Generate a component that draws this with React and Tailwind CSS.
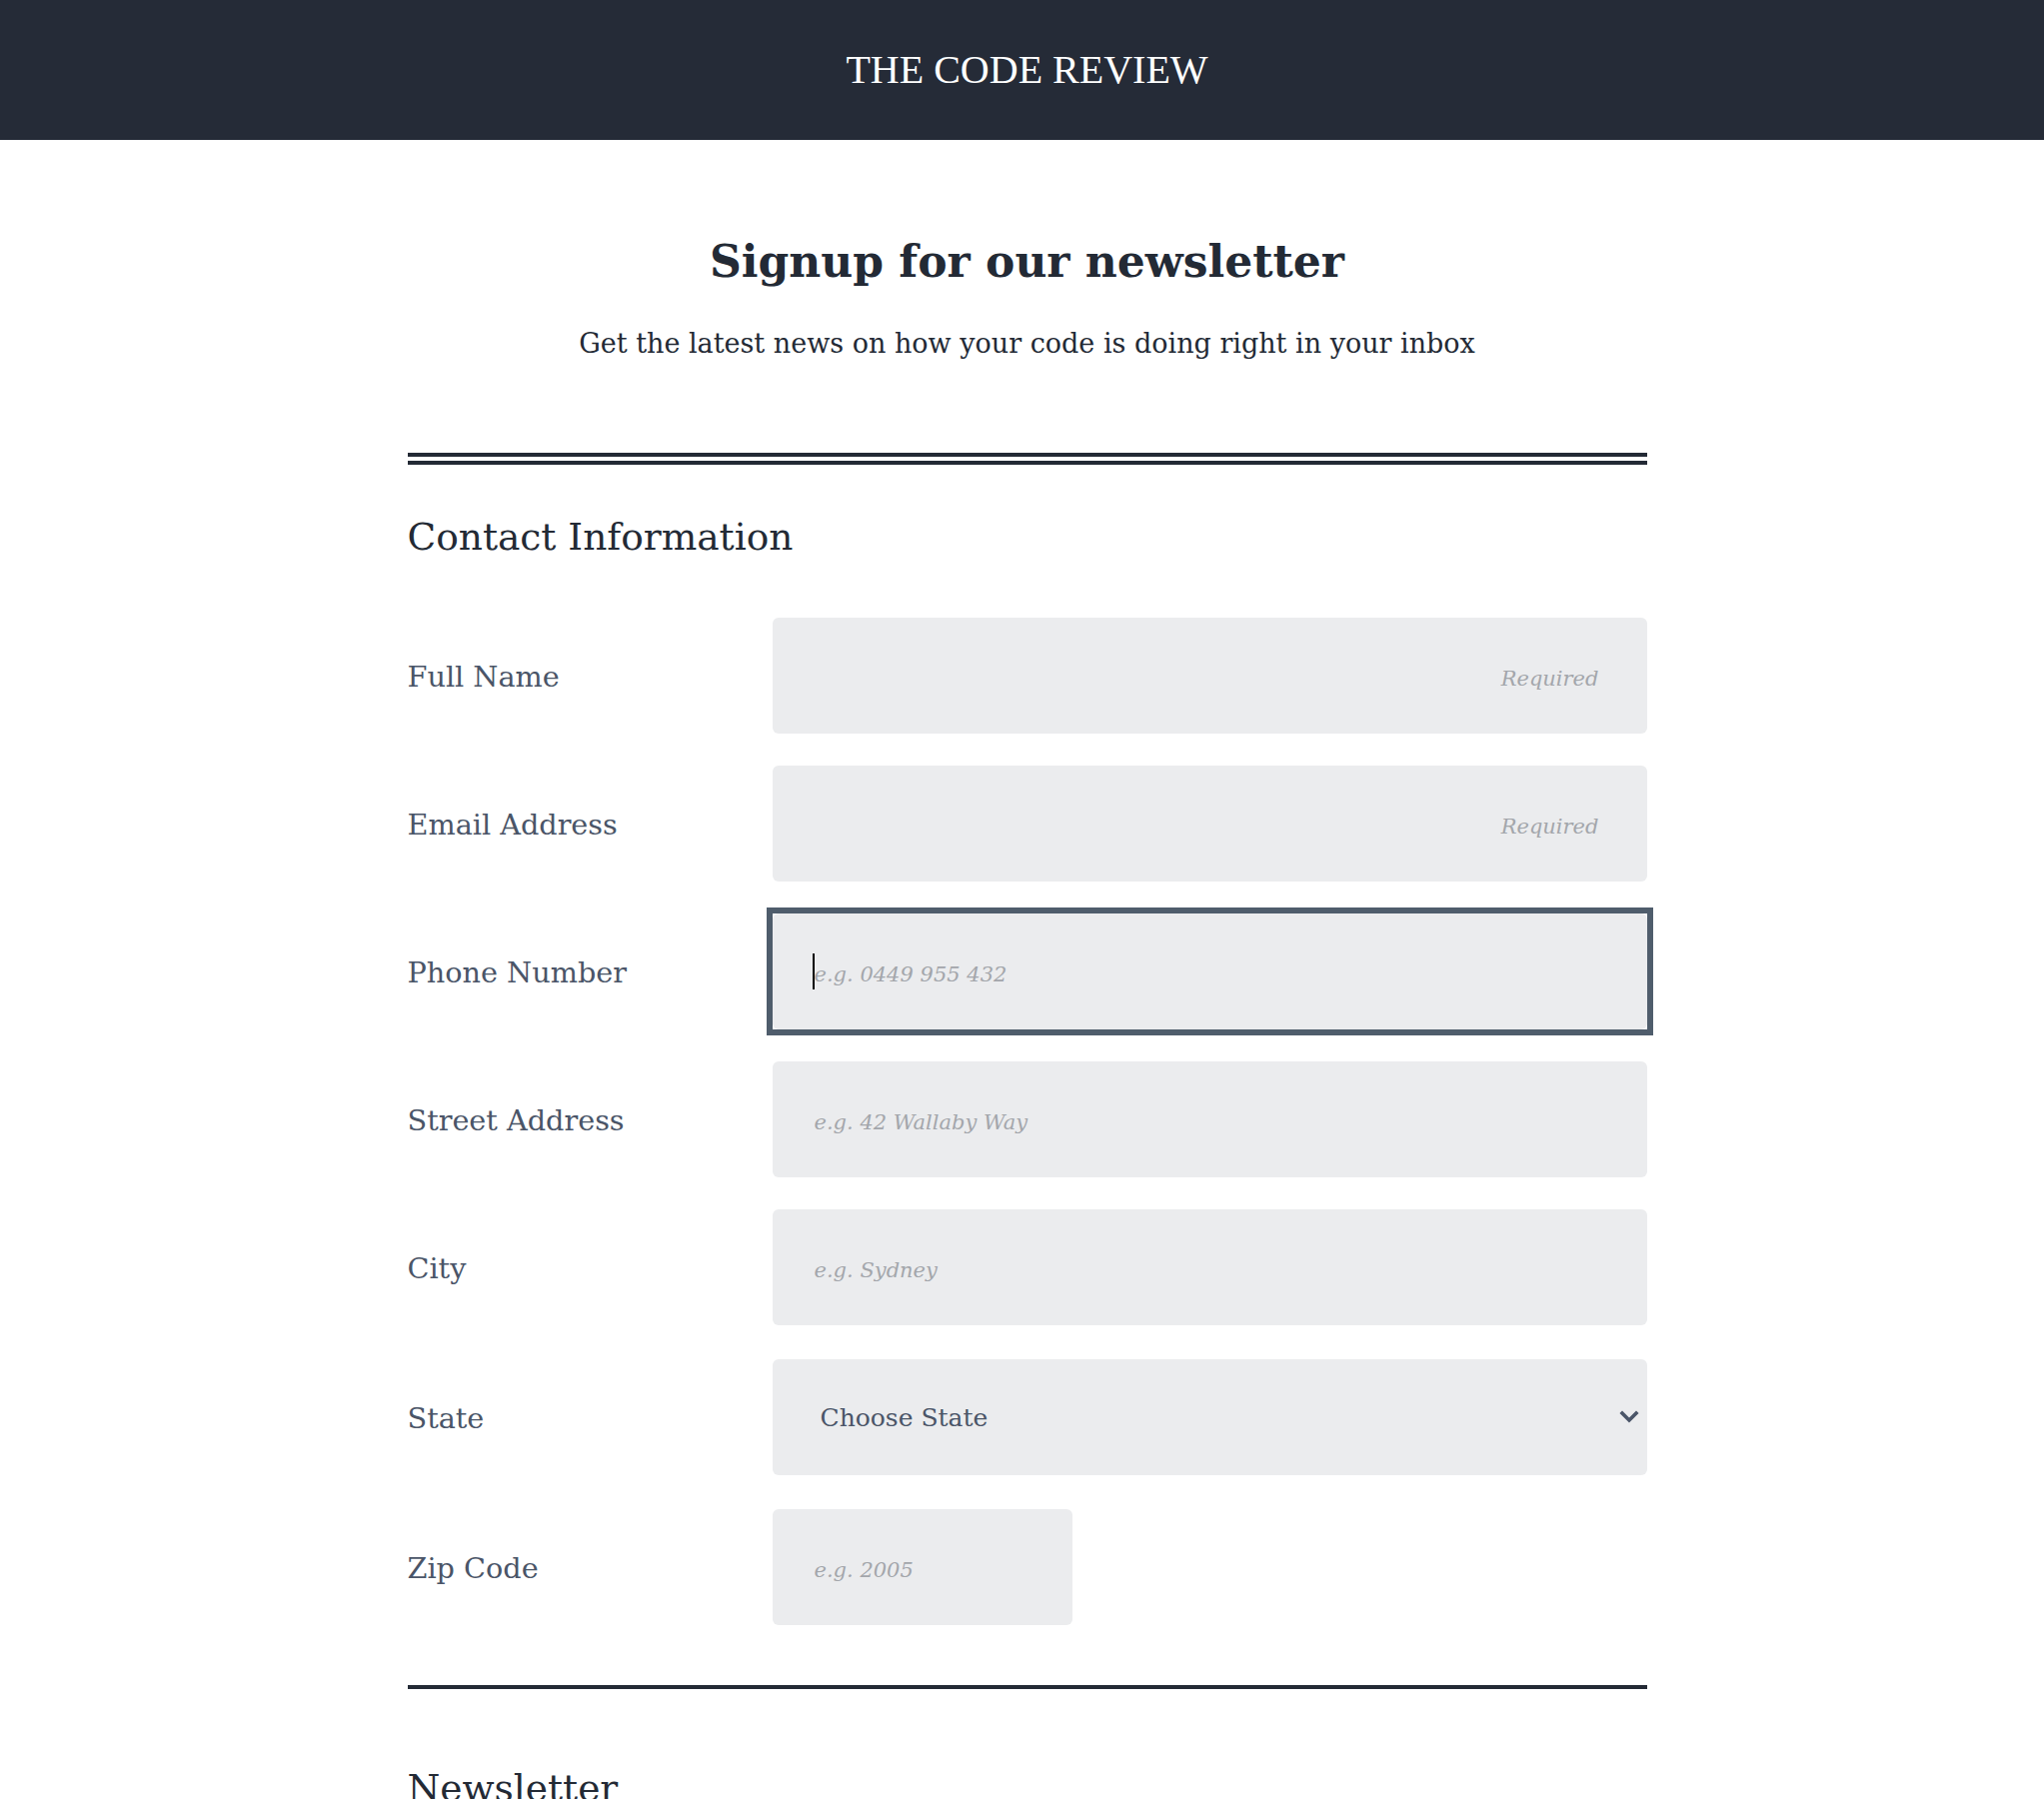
import React from "react";

const fields = [
  { label: "Full Name", placeholder: "Required", align: "right" },
  { label: "Email Address", placeholder: "Required", align: "right" },
  { label: "Phone Number", placeholder: "e.g. 0449 955 432", focused: true },
  { label: "Street Address", placeholder: "e.g. 42 Wallaby Way" },
  { label: "City", placeholder: "e.g. Sydney" },
];

function Field({ label, placeholder, align, focused }) {
  const input = (
    <input
      type="text"
      placeholder={placeholder}
      className={
        "block h-[116px] w-full rounded-[6px] bg-[#ebecee] pl-[42px] pr-[48px] pt-[6px] text-[21px] text-[#4a5568] placeholder:italic placeholder:text-[#a3a6ab] outline-none " +
        (align === "right" ? "text-right" : "")
      }
    />
  );

  return (
    <div className="grid grid-cols-[365px_1fr] items-center">
      <label className="pt-[4px] text-[28.7px] text-[#4a5568]">{label}</label>
      {focused ? (
        <div className="relative -m-[6px] border-[6px] border-[#4f5d6c]">
          {input}
          <span className="absolute left-[40px] top-[40px] h-[36px] w-[2px] bg-black" />
        </div>
      ) : (
        input
      )}
    </div>
  );
}

export default function App() {
  return (
    <div className="min-h-screen bg-white font-['DejaVu_Serif',serif] text-[#232a35]">
      {/* Header */}
      <header className="flex h-[140px] items-center justify-center bg-[#252b37] pl-[10px]">
        <h1 className="font-['Liberation_Serif',serif] text-[40px] leading-none text-white">
          THE CODE REVIEW
        </h1>
      </header>

      <div className="pl-[10px]">
        <main className="mx-auto w-[1240px] pt-[96px]">
          <div className="text-center">
            <h2 className="text-[44px] font-bold leading-[52px]">Signup for our newsletter</h2>
            <p className="mt-[37px] text-[27px] leading-[38px]">
              Get the latest news on how your code is doing right in your inbox
            </p>
          </div>

          <div className="mt-[90px] h-[12px] border-y-[4px] border-[#232a35]" />

          {/* Contact */}
          <section>
            <h3 className="mt-[48px] text-[37.5px] leading-[48px]">Contact Information</h3>

            <div className="mt-[57px] flex flex-col gap-[32px]">
              {fields.map((f) => (
                <Field key={f.label} {...f} />
              ))}

              <div className="mt-[2px] grid grid-cols-[365px_1fr] items-center">
                <label className="pt-[4px] text-[28.7px] text-[#4a5568]">State</label>
                <div className="relative">
                  <select
                    defaultValue=""
                    className="block h-[116px] w-full appearance-none rounded-[6px] bg-[#ebecee] pl-[48px] pt-[2px] text-[25px] text-[#4a5568] outline-none"
                  >
                    <option value="">Choose State</option>
                    <option>NSW</option>
                    <option>VIC</option>
                    <option>QLD</option>
                  </select>
                  <svg
                    className="pointer-events-none absolute right-[8px] top-1/2 -translate-y-1/2"
                    width="20"
                    height="14"
                    viewBox="0 0 20 14"
                    fill="none"
                  >
                    <path d="M3 3 L10 10 L17 3" stroke="#4a5568" strokeWidth="3.6" strokeLinecap="square" />
                  </svg>
                </div>
              </div>

              <div className="mt-[2px] grid grid-cols-[365px_1fr] items-center">
                <label className="pt-[4px] text-[28.7px] text-[#4a5568]">Zip Code</label>
                <input
                  type="text"
                  placeholder="e.g. 2005"
                  className="block h-[116px] w-[300px] rounded-[6px] bg-[#ebecee] pl-[42px] pr-[20px] pt-[6px] text-[21px] text-[#4a5568] placeholder:italic placeholder:text-[#a3a6ab] outline-none"
                />
              </div>
            </div>
          </section>

          <div className="mt-[60px] h-[4px] bg-[#232a35]" />

          <section>
            <h3 className="mt-[75px] text-[37.5px] leading-[48px]">Newsletter</h3>
          </section>
        </main>
      </div>
    </div>
  );
}
